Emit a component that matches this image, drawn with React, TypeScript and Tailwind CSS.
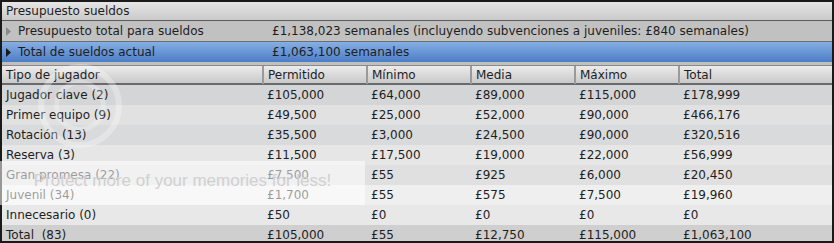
const rows = [
  { tipo: "Jugador clave (2)", vals: ["£105,000", "£64,000", "£89,000", "£115,000", "£178,999"], bg: "bg-[#d4d5d7]" },
  { tipo: "Primer equipo (9)", vals: ["£49,500", "£25,000", "£52,000", "£90,000", "£466,176"], bg: "bg-[#e1e1e2]" },
  { tipo: "Rotación (13)", vals: ["£35,500", "£3,000", "£24,500", "£90,000", "£320,516"], bg: "bg-[#d9dadb]" },
  { tipo: "Reserva (3)", vals: ["£11,500", "£17,500", "£19,000", "£22,000", "£56,999"], bg: "bg-[#e6e6e7]" },
  { tipo: "Gran promesa (22)", vals: ["£7,500", "£55", "£925", "£6,000", "£20,450"], bg: "bg-[#e0e0e1]" },
  { tipo: "Juvenil (34)", vals: ["£1,700", "£55", "£575", "£7,500", "£19,960"], bg: "bg-[#efefef]" },
  { tipo: "Innecesario (0)", vals: ["£50", "£0", "£0", "£0", "£0"], bg: "bg-[#e8e8e9]" },
  { tipo: "Total  (83)", vals: ["£105,000", "£55", "£12,750", "£115,000", "£1,063,100"], bg: "bg-[#cfcfcf]" },
]

const cols = ["Tipo de jugador", "Permitido", "Mínimo", "Media", "Máximo", "Total"]

function Triangle({ color }: { color: string }) {
  return (
    <svg width="5" height="9" viewBox="0 0 5 9" className="shrink-0">
      <path d="M0 0 L5 4.5 L0 9 Z" fill={color} />
    </svg>
  )
}

export default function App() {
  return (
    <div className="w-[834px] h-[243px] bg-[#1a1a1a] p-[2px] overflow-hidden relative font-['DejaVu_Sans',sans-serif] text-[12px] text-[#1e1e1e]">
      <div className="h-full flex flex-col bg-[#c0c0c0]">
        {/* Title */}
        <div className="h-[19px] flex items-center px-[4px] bg-gradient-to-b from-[#e6e6e6] to-[#cacaca] border-b border-[#5a5a5a] shrink-0">
          Presupuesto sueldos
        </div>

        {/* Summary rows */}
        <div className="h-[21px] flex items-center bg-[#c1c1c1] border-b border-[#6e6e6e] shrink-0">
          <div className="w-[260px] flex items-center gap-[7px] pl-[4px]">
            <Triangle color="#8a8a8a" />
            <span>Presupuesto total para sueldos</span>
          </div>
          <span className="pl-[10px]">£1,138,023 semanales (incluyendo subvenciones a juveniles: £840 semanales)</span>
        </div>
        <div className="h-[20px] flex items-center bg-gradient-to-b from-[#86afe3] to-[#4c7dc6] shrink-0">
          <div className="w-[260px] flex items-center gap-[7px] pl-[4px]">
            <Triangle color="#1a1a1a" />
            <span>Total de sueldos actual</span>
          </div>
          <span className="pl-[10px]">£1,063,100 semanales</span>
        </div>
        <div className="h-[3px] bg-[#c0c0c0] shrink-0" />

        {/* Table */}
        <div className="flex-1 flex flex-col border-t border-[#8a8a8a] overflow-hidden">
          <div className="h-[19px] grid grid-cols-[260px_104px_104px_104px_104px_1fr] bg-gradient-to-b from-[#ececec] to-[#c9c9c9] border-b-2 border-[#6a6a6a] shrink-0">
            {cols.map((c, i) => (
              <div
                key={c}
                className={`flex items-center px-[4px] ${i > 0 ? "border-l-2 border-[#9a9a9a]" : ""}`}
              >
                {c}
              </div>
            ))}
          </div>
          {rows.map((r) => (
            <div
              key={r.tipo}
              className={`h-[20px] shrink-0 grid grid-cols-[260px_104px_104px_104px_104px_1fr] ${r.bg}`}
            >
              <div className="flex items-center px-[4px] whitespace-pre">{r.tipo}</div>
              {r.vals.map((v, i) => (
                <div key={i} className="flex items-center pl-[5px]">
                  {v}
                </div>
              ))}
            </div>
          ))}
        </div>
      </div>

      {/* photobucket watermark */}
      <div className="absolute left-[38px] top-[64px] w-[84px] h-[84px] rounded-full border-[6px] border-white/30 pointer-events-none flex items-center justify-center">
        <div className="w-[52px] h-[52px] rounded-full border-[5px] border-white/25" />
      </div>
      <div className="absolute left-0 top-[161px] w-[365px] h-[44px] bg-white/55 pointer-events-none flex items-center justify-center pb-[6px]">
        <span className="whitespace-nowrap text-[17px] leading-none text-[#d0d0d0] font-['Liberation_Sans',sans-serif]">
          Protect more of your memories for less!
        </span>
      </div>
    </div>
  )
}
